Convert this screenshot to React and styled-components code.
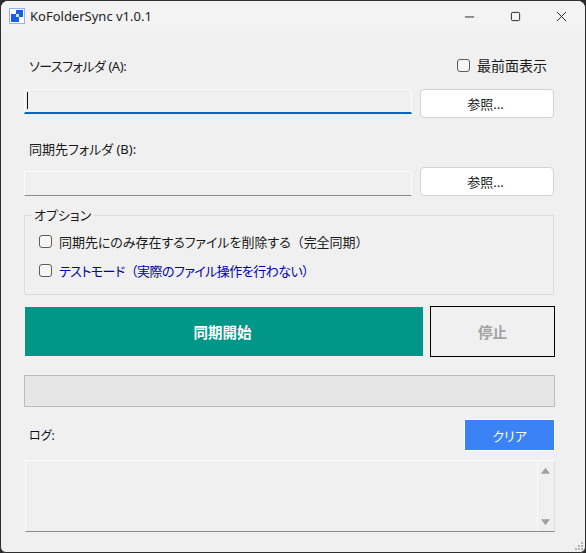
import React from 'react';
import styled, { createGlobalStyle } from 'styled-components';

const GlobalStyle = createGlobalStyle`
  html, body {
    margin: 0;
    padding: 0;
    background: #2b2b2b;
  }
`;

const fontStack = `"Noto Sans", "Noto Sans CJK JP", sans-serif`;

const App = () => (
  <>
    <GlobalStyle />
    <Window>
      <TitleBar>
        <AppIcon viewBox="0 0 16 16">
          <rect x="0.5" y="0.5" width="15" height="15" fill="#fff" stroke="#8db4f5" />
          <rect x="2" y="6" width="8" height="8" fill="#1a5cf0" />
          <rect x="7" y="2" width="7" height="7" fill="#1a5cf0" />
          <rect x="7" y="6" width="3" height="3" fill="#cfe0ff" />
        </AppIcon>
        <Title>KoFolderSync v1.0.1</Title>
        <WindowControls>
          <ControlIcon viewBox="0 0 12 12">
            <path d="M1 6.5h10" />
          </ControlIcon>
          <ControlIcon viewBox="0 0 12 12">
            <rect x="1.5" y="1.5" width="9" height="9" rx="1.5" />
          </ControlIcon>
          <ControlIcon viewBox="0 0 12 12">
            <path d="M1 1l10 10M11 1L1 11" />
          </ControlIcon>
        </WindowControls>
      </TitleBar>

      <Content>
        <LabelRow>
          <FieldLabel $tight>ソースフォルダ (A):</FieldLabel>
          <TopmostOption>
            <CheckBox />
            <span>最前面表示</span>
          </TopmostOption>
        </LabelRow>
        <FieldRow>
          <PathInput $focused>
            <Caret />
          </PathInput>
          <BrowseButton>参照...</BrowseButton>
        </FieldRow>

        <LabelRow $second>
          <FieldLabel>同期先フォルダ (B):</FieldLabel>
        </LabelRow>
        <FieldRow>
          <PathInput />
          <BrowseButton>参照...</BrowseButton>
        </FieldRow>

        <OptionsGroup>
          <Legend>オプション</Legend>
          <OptionRow>
            <CheckBox />
            <span>
              同期先にのみ存在するファイルを削除する<Paren>（</Paren>完全同期<Paren>）</Paren>
            </span>
          </OptionRow>
          <OptionRow $test>
            <CheckBox />
            <span>
              テストモード<Paren>（</Paren>実際のファイル操作を行わない<Paren>）</Paren>
            </span>
          </OptionRow>
        </OptionsGroup>

        <ActionRow>
          <StartButton>同期開始</StartButton>
          <StopButton>停止</StopButton>
        </ActionRow>

        <ProgressBar />

        <LogHeader>
          <LogLabel>ログ:</LogLabel>
          <ClearButton>クリア</ClearButton>
        </LogHeader>

        <LogBox>
          <LogText />
          <ScrollBar>
            <ScrollArrow viewBox="0 0 10 7">
              <path d="M5 0.5L10 7H0z" />
            </ScrollArrow>
            <ScrollArrow viewBox="0 0 10 7">
              <path d="M0 0h10L5 6.5z" />
            </ScrollArrow>
          </ScrollBar>
        </LogBox>
      </Content>

      <SizeGrip viewBox="0 0 8 8">
        <path d="M6 0h2v2H6zM3 3h2v2H3zM6 3h2v2H6zM0 6h2v2H0zM3 6h2v2H3zM6 6h2v2H6z" />
      </SizeGrip>
    </Window>
  </>
);

const Window = styled.div`
  position: relative;
  box-sizing: border-box;
  width: 586px;
  height: 553px;
  background: #f0f0f0;
  border: 1px solid #2e2e2e;
  border-radius: 8px 8px 6px 6px;
  overflow: hidden;
  font-family: ${fontStack};
  font-size: 12px;
  font-feature-settings: "palt";
  color: #1a1a1a;
`;

const TitleBar = styled.div`
  display: flex;
  align-items: center;
  height: 30px;
  padding-left: 8px;
  background: #f3f3f3;
`;

const AppIcon = styled.svg`
  width: 16px;
  height: 16px;
`;

const Title = styled.span`
  margin-left: 5px;
  font-size: 13px;
  color: #222;
`;

const WindowControls = styled.div`
  display: flex;
  align-items: center;
  gap: 35px;
  margin-left: auto;
  margin-right: 18px;
`;

const ControlIcon = styled.svg`
  width: 11px;
  height: 11px;
  fill: none;
  stroke: #1a1a1a;
  stroke-width: 1;
`;

const Content = styled.div`
  display: flex;
  flex-direction: column;
  padding: 0 30px 0 23px;
`;

const LabelRow = styled.div`
  display: flex;
  align-items: center;
  justify-content: space-between;
  height: 18px;
  margin-top: ${(p) => (p.$second ? '21px' : '25px')};
  margin-bottom: ${(p) => (p.$second ? '10px' : '15px')};
  padding: 0 8px 0 5px;
`;

const FieldLabel = styled.span`
  font-size: 13px;
  letter-spacing: ${(p) => (p.$tight ? '-0.45px' : '0')};
  color: #1a1a1a;
`;

const TopmostOption = styled.label`
  display: flex;
  align-items: center;
  gap: 7px;
  font-size: 14px;
`;

const CheckBox = styled.span`
  box-sizing: border-box;
  flex: none;
  width: 13px;
  height: 13px;
  background: #f6f6f6;
  border: 1px solid #5c5c5c;
  border-radius: 3px;
`;

const FieldRow = styled.div`
  display: flex;
  align-items: flex-end;
  gap: 8px;
  height: 29px;
`;

const PathInput = styled.div`
  box-sizing: border-box;
  position: relative;
  flex: none;
  width: 388px;
  height: 25px;
  background: #f0f0f0;
  border: 1px solid #fbfbfb;
  border-bottom: ${(p) => (p.$focused ? '2px solid #0067c0' : '1px solid #8a8a8a')};
  ${(p) => p.$focused && 'margin-bottom: 4px;'}
`;

const Caret = styled.span`
  position: absolute;
  left: 2px;
  top: 2px;
  width: 1px;
  height: 17px;
  background: #111;
`;

const BrowseButton = styled.button`
  box-sizing: border-box;
  width: 134px;
  height: 29px;
  padding: 0 3px 0 0;
  background: #fff;
  border: 1px solid #d2d2d2;
  border-radius: 4px;
  font-family: ${fontStack};
  font-size: 13px;
  font-feature-settings: "palt";
  color: #1a1a1a;
`;

const OptionsGroup = styled.fieldset`
  box-sizing: border-box;
  width: 530px;
  height: 89px;
  margin: 10px 0 0;
  padding: 3px 14px 0;
  border: 1px solid #dcdcdc;
  border-radius: 1px;
`;

const Legend = styled.legend`
  padding: 0 3px 0 2px;
  margin-left: -7px;
  font-size: 13px;
  line-height: 18px;
  color: #1a1a1a;
`;

const OptionRow = styled.label`
  display: flex;
  align-items: center;
  gap: 7px;
  height: 29px;
  font-size: 13px;
  letter-spacing: ${(p) => (p.$test ? '-0.55px' : '-0.05px')};
  color: ${(p) => (p.$test ? '#0000a8' : '#1a1a1a')};
`;

const Paren = styled.span`
  font-feature-settings: normal;
`;

const ActionRow = styled.div`
  display: flex;
  align-items: stretch;
  gap: 6px;
  margin: 11px 0 0 0;
  height: 51px;
`;

const StartButton = styled.button`
  box-sizing: border-box;
  width: 400px;
  margin: 0 0 0 1px;
  padding: 0 3px 0 0;
  background: #009688;
  border: 0;
  border-right: 1px solid #fff;
  border-bottom: 1px solid #f0f0f0;
  border-top: 1px solid #f0f0f0;
  font-family: ${fontStack};
  font-size: 14.5px;
  font-weight: 700;
  color: #fff;
`;

const StopButton = styled.button`
  box-sizing: border-box;
  width: 125px;
  background: #f0f0f0;
  border: 1px solid #000;
  font-family: ${fontStack};
  font-size: 14.5px;
  font-weight: 700;
  color: #a3a3a3;
`;

const ProgressBar = styled.div`
  box-sizing: border-box;
  width: 531px;
  height: 32px;
  margin-top: 18px;
  background: #e6e6e6;
  border: 1px solid #bcbcbc;
`;

const LogHeader = styled.div`
  display: flex;
  align-items: center;
  justify-content: space-between;
  width: 531px;
  height: 32px;
  margin-top: 12px;
`;

const LogLabel = styled.span`
  margin-left: 5px;
  font-size: 12px;
  color: #0a1020;
`;

const ClearButton = styled.button`
  box-sizing: border-box;
  width: 91px;
  height: 32px;
  padding: 0;
  background: #3b82f6;
  border: 1px solid #fff;
  font-family: ${fontStack};
  font-size: 13px;
  font-feature-settings: "palt";
  color: #fff;
`;

const LogBox = styled.div`
  box-sizing: border-box;
  display: flex;
  width: 530px;
  height: 72px;
  margin: 9px 0 0 1px;
  background: #f0f0f0;
  border: 1px solid #fbfbfb;
  border-bottom: 1px solid #8a8a8a;
  border-right: 1px solid #e2e2e2;
`;

const LogText = styled.div`
  flex: 1;
`;

const ScrollBar = styled.div`
  box-sizing: border-box;
  display: flex;
  flex-direction: column;
  align-items: center;
  justify-content: space-between;
  width: 17px;
  padding: 6px 2px 5px 0;
  border-left: 1px solid #fbfbfb;
`;

const ScrollArrow = styled.svg`
  width: 9px;
  height: 7px;
  fill: #a0a0a0;
`;

const SizeGrip = styled.svg`
  position: absolute;
  right: 2px;
  bottom: 2px;
  width: 8px;
  height: 8px;
  fill: #b5b5b5;
`;

export default App;
